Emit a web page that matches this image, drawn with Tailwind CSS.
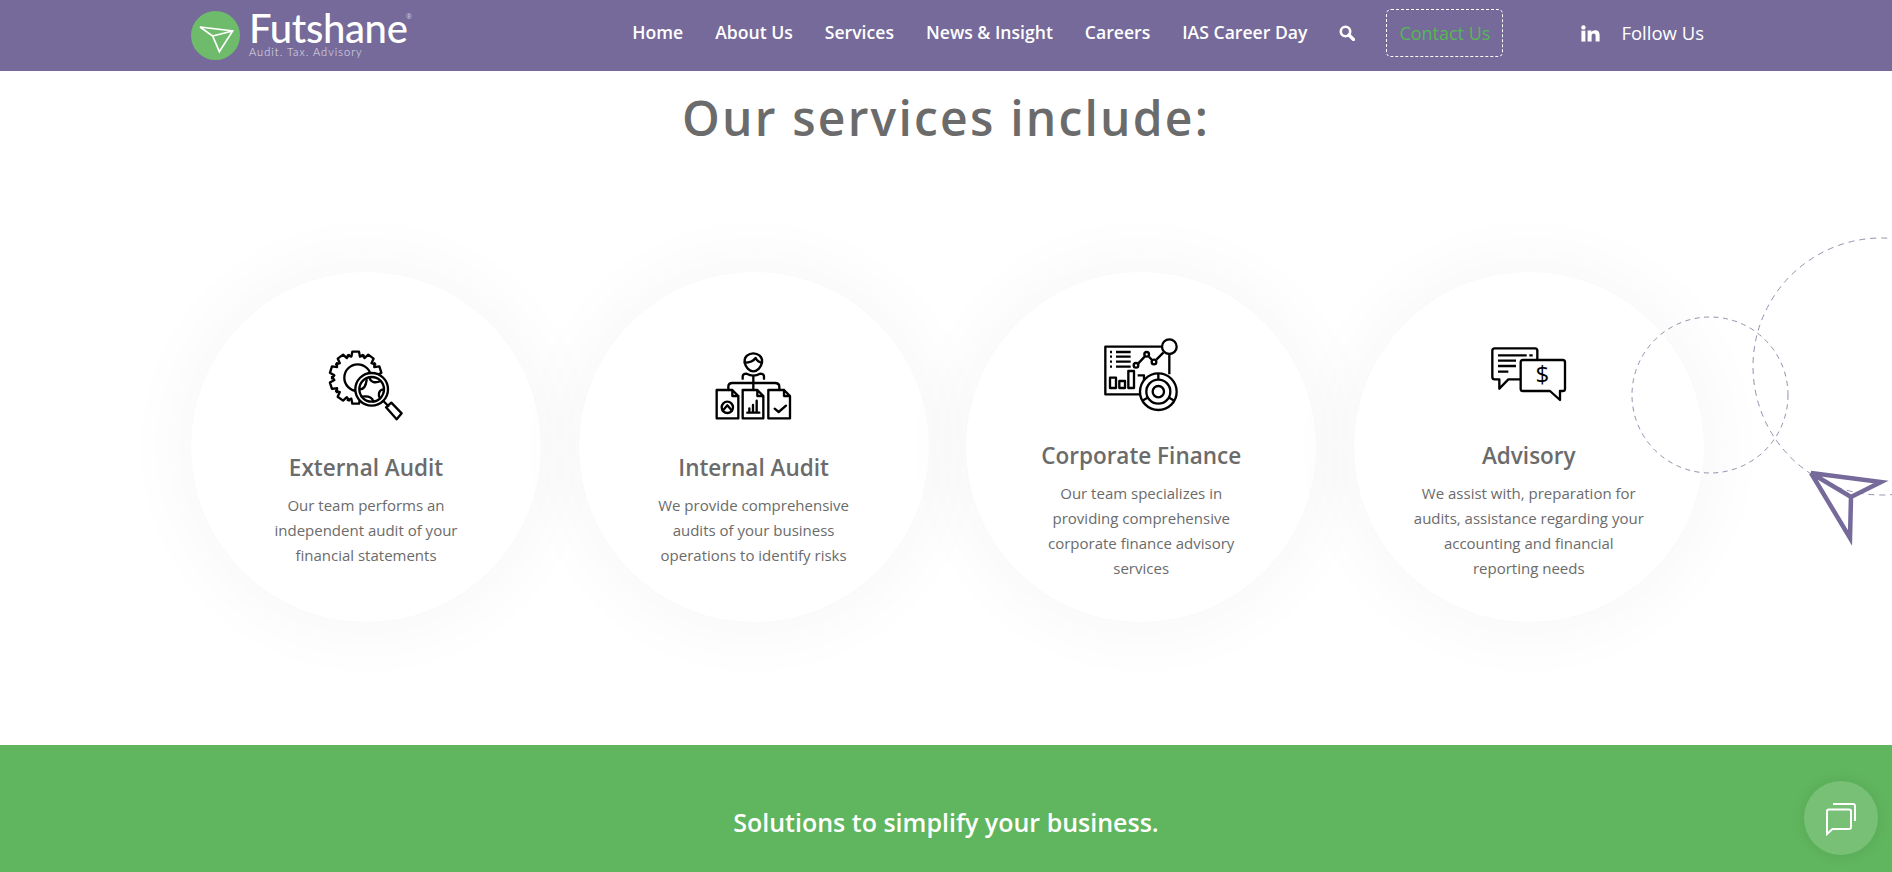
<!DOCTYPE html>
<html lang="en">
<head>
    <meta charset="UTF-8">
    <title>Futshane - Our services</title>
    <script src="https://cdn.jsdelivr.net/npm/@tailwindcss/browser@4"></script>
</head>
<body class="h-[872px] overflow-hidden bg-white font-['Open_Sans',sans-serif] text-[#6b6b6b]">
    <header class="h-[71px] bg-[#756a9a] flex items-center justify-between pl-[191px] pr-[188px] relative z-10">
        <a href="#" class="flex items-start">
            <svg class="w-[49px] h-[49px]" viewBox="63 28 147 147">
                <circle cx="136.5" cy="101.5" r="73.5" fill="#6dbb6b"/>
                <path d="M90 76 L188 88 L148 150 L128 103 Z M128 103 L188 88" fill="none" stroke="#fff" stroke-width="5" stroke-linejoin="miter"/>
            </svg>
            <div class="ml-[9px] relative w-[165px] h-[49px] text-white">
                <span class="absolute left-0 top-[-3px] font-['Lato',sans-serif] font-medium text-[40px] leading-[40px] tracking-[-0.35px]">Futshane</span>
                <span class="absolute left-[157px] top-[2px] text-[7px] leading-[8px] text-white/70">®</span>
                <span class="absolute left-0 top-[35px] font-['Lato',sans-serif] font-light text-[11px] leading-[12px] tracking-[1.05px] text-white/80 whitespace-nowrap">Audit. Tax. Advisory</span>
            </div>
        </a>
        <nav class="flex items-center pb-[5px] text-white text-[17.6px] font-semibold leading-none">
            <a href="#" class="mr-8">Home</a>
            <a href="#" class="mr-8">About Us</a>
            <a href="#" class="mr-8">Services</a>
            <a href="#" class="mr-8">News &amp; Insight</a>
            <a href="#" class="mr-8">Careers</a>
            <a href="#" class="mr-8">IAS Career Day</a>
            <svg class="w-[16px] h-[16px] mr-[31px]" viewBox="0 0 16 16" fill="none" stroke="#fff">
                <circle cx="6.5" cy="6.5" r="4.7" stroke-width="2.6"/>
                <path d="M10 10 L14.5 14.5" stroke-width="3.2" stroke-linecap="round"/>
            </svg>
            <a href="#" class="w-[117px] h-[48px] flex items-center justify-center border border-dashed border-white rounded-[5px] text-[#55b853] text-[18px] font-normal mr-[78px]">Contact Us</a>
            <svg class="w-[19px] h-[17px] mr-[21px]" viewBox="0 0 19 17" fill="#fff">
                <circle cx="2.4" cy="2.4" r="2.2"/>
                <rect x="0.4" y="5.6" width="4" height="11"/>
                <path d="M6.6 5.6 H10.4 V7.2 C11.2 6 12.6 5.3 14.2 5.3 C17.6 5.3 18.6 7.4 18.6 10.4 V16.6 H14.6 V11 C14.6 9.6 14.2 8.6 12.8 8.6 C11.2 8.6 10.6 9.8 10.6 11 V16.6 H6.6 Z"/>
            </svg>
            <a href="#" class="font-normal text-[18.5px]">Follow Us</a>
        </nav>
    </header>

    <main class="relative h-[674px] overflow-hidden">
        <h1 class="text-center text-[48px] leading-[68px] font-semibold tracking-[2.2px] mt-[13px]">Our services include:</h1>

        <div class="flex gap-[37.6px] pl-[191px] mt-[120px]">
            <section class="relative z-[1] w-[350px] h-[350px] rounded-full bg-white shadow-[0_0_60px_20px_rgba(0,0,0,0.028)] flex flex-col items-center justify-center pt-[14px] shrink-0">
                <svg class="w-[110px] h-[90px]" viewBox="3 30 330 270" fill="none" stroke="#000" stroke-width="7" stroke-linejoin="round" stroke-linecap="round">
                    <g transform="translate(137 143)">
                        <path id="tooth" d="M-24 -67 L-13 -63 L-10 -78 H10 L13 -63 L24 -67"/>
                        <use href="#tooth" transform="rotate(36)"/>
                        <use href="#tooth" transform="rotate(72)"/>
                        <use href="#tooth" transform="rotate(108)"/>
                        <use href="#tooth" transform="rotate(144)"/>
                        <use href="#tooth" transform="rotate(180)"/>
                        <use href="#tooth" transform="rotate(216)"/>
                        <use href="#tooth" transform="rotate(252)"/>
                        <use href="#tooth" transform="rotate(288)"/>
                        <use href="#tooth" transform="rotate(324)"/>
                    </g>
                    <circle cx="143" cy="143" r="40"/>
                    <circle cx="185" cy="178" r="49" fill="#fff"/>
                    <circle cx="185" cy="178" r="37" fill="#fff"/>
                    <path d="M150 178 C162 178 168 165 170 150 M178 142 C182 158 196 160 212 153 M220 178 C205 180 204 196 210 205 M190 214 C186 200 170 198 155 200"/>
                    <path d="M220 213 L235 228 M228 232 L244 218 L275 250 L260 268 Z"/>
                </svg>
                <h2 class="mt-[23px] text-[22.5px] leading-[30px] font-semibold">External Audit</h2>
                <p class="mt-[10px] text-[15px] leading-[25px] text-center">Our team performs an<br>independent audit of your<br>financial statements</p>
            </section>

            <section class="relative z-[1] w-[350px] h-[350px] rounded-full bg-white shadow-[0_0_60px_20px_rgba(0,0,0,0.028)] flex flex-col items-center justify-center pt-[14px] shrink-0">
                <svg class="w-[110px] h-[90px]" viewBox="-3 0 330 270" fill="none" stroke="#000" stroke-width="7" stroke-linejoin="round" stroke-linecap="round">
                    <path d="M134 66 C132 50 146 40 160 40 C174 40 188 50 186 66 C184 82 172 94 160 94 C148 94 136 82 134 66 Z"/>
                    <path d="M134 68 C150 68 160 64 167 54 C171 62 176 67 186 68"/>
                    <path d="M128 116 V110 C128 104 133 101 140 101 C152 108 168 108 180 101 C187 101 192 104 192 110 V116"/>
                    <path d="M160 108 V150 M85 150 V140 C85 133 90 129 97 129 H225 C232 129 238 133 238 140 V150"/>
                    <path d="M50 150 H97 L115 168 V235 H50 Z M97 150 V168 H115"/>
                    <path d="M128 150 H172 L190 168 V235 H128 Z M172 150 V168 H190"/>
                    <path d="M205 150 H252 L270 168 V235 H205 Z M252 150 V168 H270"/>
                    <circle cx="82" cy="202" r="17"/>
                    <path d="M68 212 L82 196 L96 212"/>
                    <path d="M142 218 H178 M148 218 V205 M159 218 V195 M170 218 V182"/>
                    <path d="M224 206 L236 216 L258 197"/>
                </svg>
                <h2 class="mt-[23px] text-[22.5px] leading-[30px] font-semibold">Internal Audit</h2>
                <p class="mt-[10px] text-[15px] leading-[25px] text-center">We provide comprehensive<br>audits of your business<br>operations to identify risks</p>
            </section>

            <section class="relative z-[1] w-[350px] h-[350px] rounded-full bg-white shadow-[0_0_60px_20px_rgba(0,0,0,0.028)] flex flex-col items-center justify-center pt-[14px] shrink-0">
                <svg class="w-[110px] h-[90px]" viewBox="-12 6 330 270" fill="none" stroke="#000" stroke-width="7" stroke-linejoin="round">
                    <path d="M216 62 H46 V205 H150 M238 84 V145"/>
                    <path d="M60 78 H66 M78 78 H122 M60 92 H66 M78 92 H122 M60 107 H66 M78 107 H122 M60 122 H66 M78 122 H122"/>
                    <path d="M60 155 H78 V186 H60 Z M88 165 H105 V186 H88 Z M115 135 H132 V186 H115 Z M143 148 H162 V175"/>
                    <path d="M145 112 L164 92 M177 92 L186 102 M199 101 L220 80"/>
                    <circle cx="138" cy="118" r="7"/><circle cx="170" cy="85" r="7"/><circle cx="192" cy="108" r="7"/>
                    <circle cx="238" cy="62" r="22" fill="#fff"/>
                    <circle cx="205" cy="197" r="55" fill="#fff"/>
                    <circle cx="205" cy="197" r="36"/>
                    <circle cx="205" cy="197" r="17"/>
                    <path d="M205 142 V161 M157 224 L175 214 M253 224 L235 214"/>
                </svg>
                <h2 class="mt-[23px] text-[22.5px] leading-[30px] font-semibold">Corporate Finance</h2>
                <p class="mt-[10px] text-[15px] leading-[25px] text-center">Our team specializes in<br>providing comprehensive<br>corporate finance advisory<br>services</p>
            </section>

            <section class="relative z-[1] w-[350px] h-[350px] rounded-full bg-white shadow-[0_0_60px_20px_rgba(0,0,0,0.028)] flex flex-col items-center justify-center pt-[14px] shrink-0">
                <svg class="w-[110px] h-[90px]" viewBox="-18 -24 330 270" fill="none" stroke="#000" stroke-width="7" stroke-linejoin="round">
                    <path d="M122 130 H85 L58 158 V130 H44 C40 130 37 127 37 123 V44 C37 40 40 37 44 37 H165 C169 37 172 40 172 44 V72"/>
                    <path d="M54 58 H140 M148 58 H158 M54 74 H108 M54 90 H108 M54 107 H85"/>
                    <path d="M129 72 H248 C252 72 255 75 255 79 V158 C255 162 252 165 248 165 H240 V192 L210 165 H129 C125 165 122 162 122 158 V79 C122 75 125 72 129 72 Z"/>
                    <text x="187" y="142" text-anchor="middle" fill="#000" stroke="none" font-size="72" font-family="Open Sans">$</text>
                </svg>
                <h2 class="mt-[23px] text-[22.5px] leading-[30px] font-semibold">Advisory</h2>
                <p class="mt-[10px] text-[15px] leading-[25px] text-center">We assist with, preparation for<br>audits, assistance regarding your<br>accounting and financial<br>reporting needs</p>
            </section>
        </div>

        <!-- decoration over the last circle -->
        <svg class="absolute z-[2] left-[1620px] top-[159px] w-[272px] h-[320px]" viewBox="1620 230 272 320" fill="none">
            <circle cx="1710" cy="395" r="78" stroke="#8f92ad" stroke-dasharray="5 4.5"/>
            <circle cx="1881.5" cy="366.5" r="128.5" stroke="#8f92ad" stroke-dasharray="6 5"/>
            <path d="M1811 473 L1881 482 L1851 497 Z M1811 473 L1850 538 L1851 497" stroke="#756a9a" stroke-width="4.5"/>
        </svg>
    </main>

    <section class="absolute left-0 top-[745px] w-full h-[127px] bg-[#60b65e] text-center">
        <p class="mt-[59px] text-white text-[25px] leading-[36px] font-semibold">Solutions to simplify your business.</p>
    </section>

    <button class="absolute left-[1804px] top-[781px] w-[74px] h-[74px] rounded-full bg-white/15 shadow-[0_0_12px_4px_rgba(0,0,0,0.05)] flex items-center justify-center">
        <svg class="w-[36px] h-[36px]" viewBox="0 0 36 36" fill="none" stroke="#fff" stroke-width="2">
            <path d="M10 4 H30 C31.5 4 32 4.6 32 6 V21"/>
            <path d="M6 9.5 H26 C27.5 9.5 28 10.2 28 11.5 V27 C28 28.5 27.5 29 26 29 H9.5 L4 34 V11.5 C4 10.2 4.5 9.5 6 9.5 Z"/>
        </svg>
    </button>
</body>
</html>
